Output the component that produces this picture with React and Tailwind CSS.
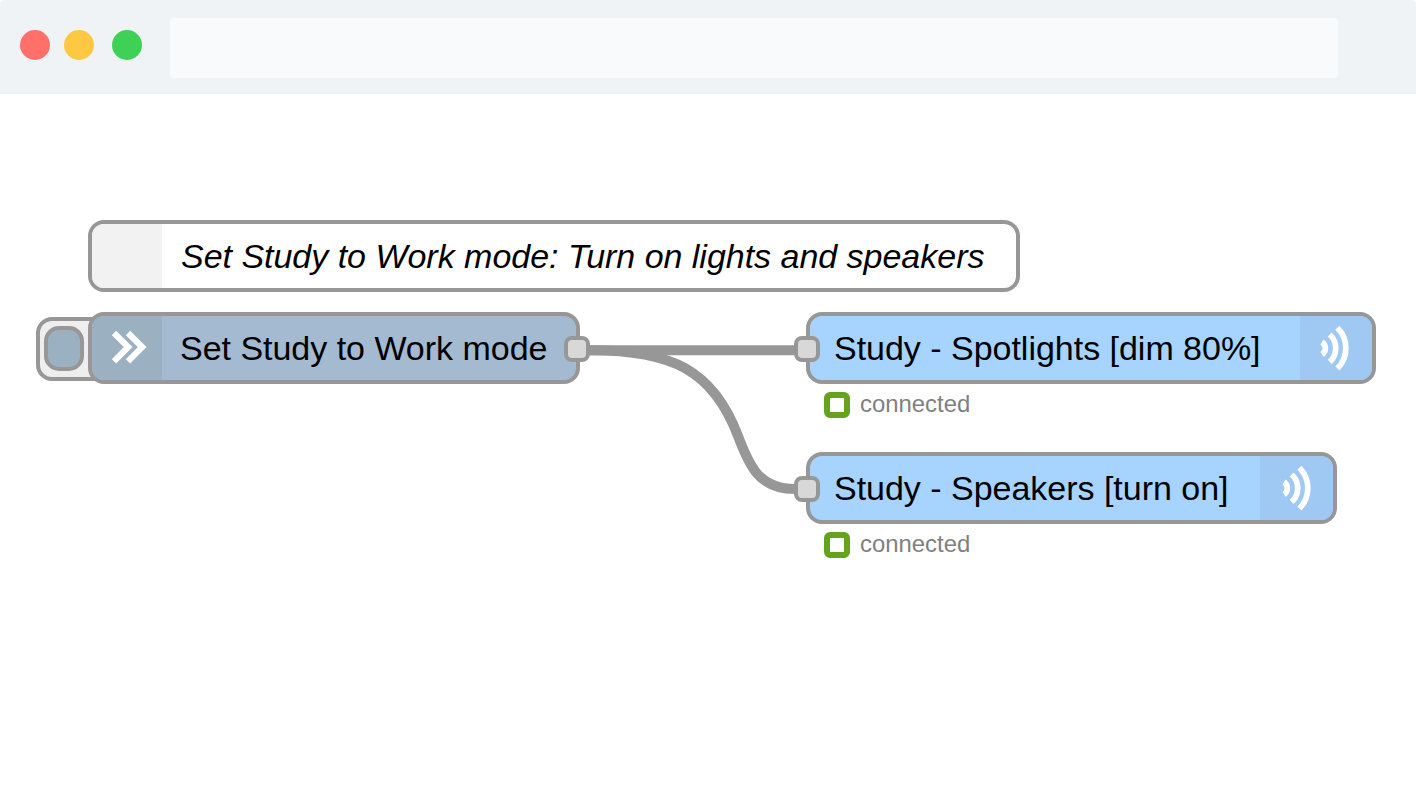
const Waves = ({ className }) => (
  <svg className={`absolute top-[8px] ${className}`} width="34" height="48" viewBox="0 0 34 48" fill="none" stroke="#fff" strokeWidth="5.7">
    <path d="M4 18A7.4 7.4 0 0 1 4 30.4" />
    <path d="M11.7 10.5A18.6 18.6 0 0 1 11.7 37.9" />
    <path d="M19.3 3.8A28.5 28.5 0 0 1 19.3 44.5" />
  </svg>
);

const Port = ({ className }) => (
  <div className={`absolute top-[20px] h-[26px] w-[26px] rounded-[8px] border-4 border-[#979797] bg-[#d8d8d8] ${className}`} />
);

const Status = ({ className }) => (
  <div className={`absolute left-[824px] flex h-[26px] items-center gap-[10px] ${className}`}>
    <span className="h-[26px] w-[26px] rounded-[6px] border-6 border-[#65a31c] bg-white" />
    <span className="relative -top-px whitespace-nowrap text-[23.9px] leading-[26px] text-[#808080]">connected</span>
  </div>
);

const Node = ({ className, children }) => (
  <div className={`absolute flex h-[72px] rounded-[16px] border-4 border-[#979797] text-[34px] leading-[64px] tracking-[-0.02px] text-black ${className}`}>
    {children}
  </div>
);

const Label = ({ className = "", children }) => (
  <span className={`whitespace-nowrap ${className}`}>{children}</span>
);

export default function App() {
  return (
    <div className="h-[796px] w-[1416px] overflow-hidden bg-white font-['Liberation_Sans',Arial,sans-serif]">
      <header className="flex h-[94px] items-start rounded-t-[5px] bg-[#eff3f6]">
        <div className="flex pl-5 pt-[30px]">
          <span className="h-[30px] w-[30px] rounded-full bg-[#ff7069]" />
          <span className="ml-[14px] h-[30px] w-[30px] rounded-full bg-[#ffc843]" />
          <span className="ml-[18px] h-[30px] w-[30px] rounded-full bg-[#3fd155]" />
        </div>
        <div className="ml-7 mt-[18px] h-[60px] w-[1168px] rounded-[4px] bg-[#f9fafc]" />
      </header>

      <main className="relative h-[702px]">
        <svg className="absolute left-0 top-0" width="1416" height="702" fill="none" stroke="#979797" strokeWidth="10">
          <path d="M580 256.3H800" />
          <path d="M580 256.3H590C672 256.3 713 276 738 342C750 374 760 395 795 395H800" />
        </svg>

        <Node className="left-[88px] top-[126px] w-[932px] bg-white">
          <div className="h-full w-[70px] rounded-l-[12px] bg-[#f2f2f2]" />
          <Label className="ml-[19px] italic">Set Study to Work mode: Turn on lights and speakers</Label>
        </Node>

        <div className="absolute left-[36px] top-[223px] h-[64px] w-[80px] rounded-[16px] border-4 border-[#979797] bg-[#eeeeee]">
          <div className="ml-[4px] mt-[5px] h-[45px] w-[40px] rounded-[15px] border-4 border-[#979797] bg-[#9bb1c1]" />
        </div>

        <Node className="left-[88px] top-[218px] w-[492px] bg-[#a4bad0]">
          <div className="relative h-full w-[70px] rounded-l-[12px] bg-[#9bb1c1]">
            <svg className="absolute left-[18px] top-[12px]" width="40" height="40" fill="none" stroke="#fff" strokeWidth="6.1">
              <path d="M4 5L18.2 19L4 33.3M18 5L32.2 19L18 33.3" />
            </svg>
          </div>
          <Label className="ml-[18px]">Set Study to Work mode</Label>
          <Port className="-right-[14px]" />
        </Node>

        <Node className="left-[806px] top-[218px] w-[570px] justify-between bg-[#a6d4ff]">
          <Port className="-left-[16px]" />
          <Label className="ml-[24px]">Study - Spotlights [dim 80%]</Label>
          <div className="relative h-full w-[72px] shrink-0 rounded-r-[12px] bg-[#9fc9f2]">
            <Waves className="left-[18px]" />
          </div>
        </Node>
        <Status className="top-[298px]" />

        <Node className="left-[806px] top-[358px] w-[531px] justify-between bg-[#a6d4ff]">
          <Port className="-left-[16px]" />
          <Label className="ml-[24px]">Study - Speakers [turn on]</Label>
          <div className="relative h-full w-[73px] shrink-0 rounded-r-[12px] bg-[#9fc9f2]">
            <Waves className="left-[20px]" />
          </div>
        </Node>
        <Status className="top-[438px]" />
      </main>
    </div>
  );
}
